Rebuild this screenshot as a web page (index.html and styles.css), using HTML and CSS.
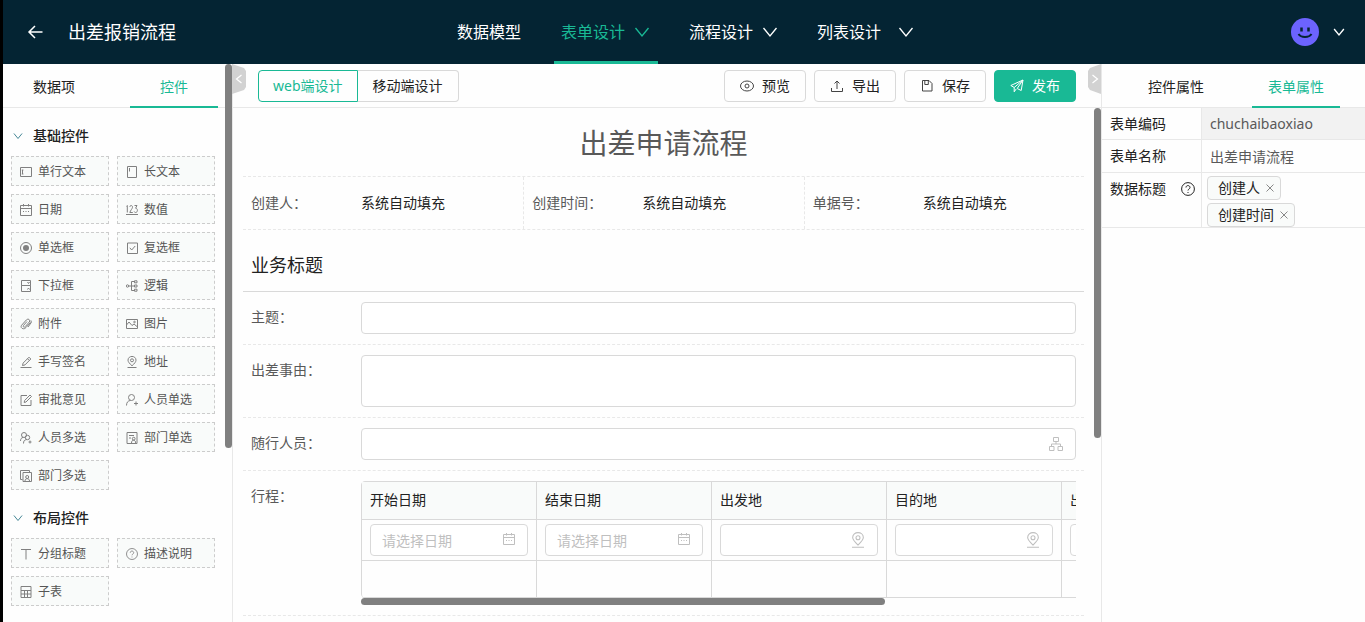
FILE: index.html
```html
<!DOCTYPE html>
<html lang="zh-CN">
<head>
<meta charset="utf-8">
<meta name="viewport" content="width=device-width, initial-scale=1">
<title>出差报销流程</title>
<link rel="stylesheet" href="styles.css">
</head>
<body>
<svg class="sprite" aria-hidden="true">
  <symbol id="chevron" viewBox="0 0 16 16"><path d="M1.5 4 8 12l6.500-8"/></symbol>
  <symbol id="back" viewBox="0 0 16 16"><path d="M8 2 2 8l6 6M2 8h13.500"/></symbol>
  <symbol id="eye" viewBox="0 0 14 14"><ellipse cx="7" cy="7" rx="6.500" ry="5"/><circle cx="7" cy="7" r="2"/></symbol>
  <symbol id="export" viewBox="0 0 14 14"><path d="M1.500 9v3.500h11V9M7 10V2M4.500 4.500 7 2l2.500 2.500"/></symbol>
  <symbol id="save" viewBox="0 0 14 14"><path d="M2.500 1.500h6.500L12 4.500v7.500H2.500zM4.800 1.500v4h3.500v-4"/></symbol>
  <symbol id="send" viewBox="0 0 14 14"><path d="M13 1 .800 6.500l3.400 2L13 1l-1.800 10.500-4-2L13 1M4.200 8.500v4.300l2-2.800"/></symbol>
  <symbol id="text" viewBox="0 0 12 12"><path d="M.5 1.500h11v9H.5zM2.500 4v4M1.800 4h1.600M1.800 8h1.600"/></symbol>
  <symbol id="longtext" viewBox="0 0 12 12"><path d="M1.500.500h9v11h-9zM3.500 2v3.500"/></symbol>
  <symbol id="calendar" viewBox="0 0 12 12"><path d="M.5 1.500h11v10H.5zM.5 4.500h11M3.500 0v2.500M8.500 0v2.500M3 7.500h1M5.500 7.500h1M8 7.500h1"/></symbol>
  <symbol id="number" viewBox="0 0 12 12"><path d="M0 10.500h12M.3 2.500l1-1v7M3.800 2.800c.3-2 3-1.500 2.700.500-.2 1.500-2 3-2.700 5.200h3M8.500 1.500H11L9.600 4.200c2.400 0 2.400 4.300 0 4.300-.800 0-1.200-.4-1.400-1"/></symbol>
  <symbol id="radio" viewBox="0 0 12 12"><circle cx="6" cy="6" r="5.500"/><circle class="solid" cx="6" cy="6" r="3"/></symbol>
  <symbol id="check" viewBox="0 0 12 12"><path d="M1.500 1h10v10.500h-10zM3.800 5.800 5.700 8 9.200 4"/></symbol>
  <symbol id="select" viewBox="0 0 12 12"><path d="M1.500.500h9v5h-9zM1.500 5.500h9v6h-9zM7.500 2l1 1.500 1-1.500M7.500 9.500l1-1.500 1 1.500"/></symbol>
  <symbol id="logic" viewBox="0 0 12 12"><circle cx="1.500" cy="6" r="1.200"/><path d="M2.800 6H8M8 1.500H5.500v9H8"/><path d="M8.500.800h2.500v2H8.500zM8.500 5h2.500v2H8.500zM8.500 9.200h2.500v2H8.500z"/></symbol>
  <symbol id="clip" viewBox="0 0 12 12"><path d="M10.500 4.500 6 9.500c-2.500 3-6.500.200-4.200-2.500L6.300 2c1.800-2 4.600 0 3 2L5.200 8.600C4 10 2.500 8.500 3.500 7.400L7 3.500M11 2.500 11.300 4.500 8 9"/></symbol>
  <symbol id="image" viewBox="0 0 12 12"><path d="M.5 1.500h11v9H.5zM.5 7l2.500-3 3 3.500L8 6l3.500 3"/><circle cx="8.500" cy="4" r=".8"/></symbol>
  <symbol id="pen" viewBox="0 0 12 12"><path d="M.5 11.500h11M2.500 9.500l.6-2.400L9 1.200l1.800 1.800L5 8.900zM7.500 2.700l1.800 1.800"/></symbol>
  <symbol id="pin" viewBox="0 0 12 12"><path d="M1.500 11.500h9M6 9.800C3.500 7.500 2 5.800 2 4.200c0-5 8-5 8 0C10 5.800 8.500 7.500 6 9.800z"/><circle cx="6" cy="4.300" r="1.500"/></symbol>
  <symbol id="edit" viewBox="0 0 12 12"><path d="M7 1.500H1v10h10V6M4.200 8.500l.4-2L10 1l1.500 1.500L6 8z"/></symbol>
  <symbol id="person" viewBox="0 0 12 12"><circle cx="5.500" cy="3.500" r="3"/><path d="M.5 11.500c0-3 1.500-5 4-5M8 9.500h4M10 7.500v4"/></symbol>
  <symbol id="people" viewBox="0 0 12 12"><circle cx="4" cy="3" r="2.500"/><circle cx="7.500" cy="5.500" r="2.200"/><path d="M.5 9c0-2 1-3.500 2.500-3.500M3.500 11.500c0-2.500 1-3.800 3-3.800M8.500 10h3M10 8.500v3"/></symbol>
  <symbol id="dept" viewBox="0 0 12 12"><path d="M1 .500h10v11H1zM3 3.500h5M3 6h2M5.500 11c0-1.800.800-2.800 2-2.800s2.200 1 2.200 2.800"/><circle cx="7.700" cy="6.700" r="1.400"/></symbol>
  <symbol id="depts" viewBox="0 0 12 12"><path d="M2.500 9.500h-2v-9h9v2M3 2.500h8.500v9H3zM5 11c0-1.500.800-2.300 2.200-2.300S9.500 9.500 9.500 11"/><circle cx="7.200" cy="7" r="1.500"/></symbol>
  <symbol id="title" viewBox="0 0 12 12"><path d="M1 1.500h10M6 1.500v10"/></symbol>
  <symbol id="help" viewBox="0 0 14 14"><circle cx="7" cy="7" r="6.400"/><path d="M5 5.500c0-2.700 4-2.400 4 0C9 7 7 7 7 8.500M7 10v1"/></symbol>
  <symbol id="grid" viewBox="0 0 12 12"><path d="M1 .500h10v11H1zM1 4.500h10M1 8h10M4.500 4.500v7M7.500 4.500v7"/></symbol>
  <symbol id="org" viewBox="0 0 14 14"><path d="M4.500.500h5v4h-5zM.5 9.500H5v4H.5zM9 9.500h4.500v4H9zM7 4.500V7M2.500 9.500V7h9v2.500"/></symbol>
  <symbol id="close" viewBox="0 0 8 8"><path d="M.5.500l7 7M7.500.500l-7 7"/></symbol>
</svg>

<header class="topbar">
  <div class="brand">
    <button class="plain" aria-label="返回"><svg class="icon-md back"><use href="#back"/></svg></button>
    <h1>出差报销流程</h1>
  </div>
  <nav class="nav">
    <a href="#model">数据模型</a>
    <a href="#form" class="active">表单设计<svg class="icon-md"><use href="#chevron"/></svg></a>
    <a href="#flow">流程设计<svg class="icon-md"><use href="#chevron"/></svg></a>
    <a href="#list" class="wide">列表设计<svg class="icon-md"><use href="#chevron"/></svg></a>
  </nav>
  <div class="account">
    <svg class="avatar" viewBox="0 0 28 28"><circle cx="14" cy="14" r="14" fill="#6c63ff"/><path d="M10.500 9.500v4M17.500 9.500v4" stroke="#042433" stroke-width="2.500"/><path d="M7.500 16c2.500 4 10.500 4 13 0" fill="none" stroke="#042433" stroke-width="2"/></svg>
    <button class="plain" aria-label="账户菜单"><svg class="icon-sm"><use href="#chevron"/></svg></button>
  </div>
</header>

<main class="workspace">
  <aside class="palette">
    <div class="tabs">
      <button>数据项</button>
      <button class="active">控件</button>
    </div>
    <h2 class="group"><svg class="icon-xs"><use href="#chevron"/></svg>基础控件</h2>
    <div class="controls">
      <button><svg><use href="#text"/></svg>单行文本</button>
      <button><svg><use href="#longtext"/></svg>长文本</button>
      <button><svg><use href="#calendar"/></svg>日期</button>
      <button><svg><use href="#number"/></svg>数值</button>
      <button><svg><use href="#radio"/></svg>单选框</button>
      <button><svg><use href="#check"/></svg>复选框</button>
      <button><svg><use href="#select"/></svg>下拉框</button>
      <button><svg><use href="#logic"/></svg>逻辑</button>
      <button><svg><use href="#clip"/></svg>附件</button>
      <button><svg><use href="#image"/></svg>图片</button>
      <button><svg><use href="#pen"/></svg>手写签名</button>
      <button><svg><use href="#pin"/></svg>地址</button>
      <button><svg><use href="#edit"/></svg>审批意见</button>
      <button><svg><use href="#person"/></svg>人员单选</button>
      <button><svg><use href="#people"/></svg>人员多选</button>
      <button><svg><use href="#dept"/></svg>部门单选</button>
      <button><svg><use href="#depts"/></svg>部门多选</button>
    </div>
    <h2 class="group"><svg class="icon-xs"><use href="#chevron"/></svg>布局控件</h2>
    <div class="controls">
      <button><svg><use href="#title"/></svg>分组标题</button>
      <button><svg><use href="#help"/></svg>描述说明</button>
      <button><svg><use href="#grid"/></svg>子表</button>
    </div>
    <div class="scroll-thumb"></div>
  </aside>

  <section class="designer">
    <button class="handle handle-left" aria-label="收起左侧"><svg><use href="#chevron"/></svg></button>
    <button class="handle handle-right" aria-label="收起右侧"><svg><use href="#chevron"/></svg></button>
    <div class="toolbar">
      <div class="switch">
        <button class="active">web端设计</button>
        <button>移动端设计</button>
      </div>
      <div class="actions">
        <button><svg><use href="#eye"/></svg>预览</button>
        <button><svg><use href="#export"/></svg>导出</button>
        <button><svg><use href="#save"/></svg>保存</button>
        <button class="primary"><svg><use href="#send"/></svg>发布</button>
      </div>
    </div>
    <div class="canvas">
      <form class="form">
        <h2 class="form-title">出差申请流程</h2>
        <div class="meta">
          <div><span>创建人：</span><b>系统自动填充</b></div>
          <div><span>创建时间：</span><b>系统自动填充</b></div>
          <div><span>单据号：</span><b>系统自动填充</b></div>
        </div>
        <h3 class="section-title">业务标题</h3>
        <div class="field">
          <label for="subject">主题：</label>
          <input id="subject" type="text">
        </div>
        <div class="field">
          <label for="reason">出差事由：</label>
          <textarea id="reason"></textarea>
        </div>
        <div class="field">
          <label for="members">随行人员：</label>
          <div class="with-icon"><input id="members" type="text"><svg><use href="#org"/></svg></div>
        </div>
        <div class="field">
          <span class="label">行程：</span>
          <div class="trip">
            <div class="trip-view">
              <table>
                <thead><tr><th>开始日期</th><th>结束日期</th><th>出发地</th><th>目的地</th><th>出</th></tr></thead>
                <tbody>
                  <tr>
                    <td><div class="with-icon date"><input type="text" placeholder="请选择日期" aria-label="开始日期"><svg><use href="#calendar"/></svg></div></td>
                    <td><div class="with-icon date"><input type="text" placeholder="请选择日期" aria-label="结束日期"><svg><use href="#calendar"/></svg></div></td>
                    <td><div class="with-icon pin"><input type="text" aria-label="出发地"><svg><use href="#pin"/></svg></div></td>
                    <td><div class="with-icon pin"><input type="text" aria-label="目的地"><svg><use href="#pin"/></svg></div></td>
                    <td><div class="with-icon"><input type="text" aria-label="出"></div></td>
                  </tr>
                  <tr class="empty"><td></td><td></td><td></td><td></td><td></td></tr>
                </tbody>
              </table>
            </div>
            <div class="trip-thumb"></div>
          </div>
        </div>
      </form>
      <div class="scroll-thumb"></div>
    </div>
  </section>

  <aside class="properties">
    <div class="tabs">
      <button>控件属性</button>
      <button class="active">表单属性</button>
    </div>
    <div class="prop">
      <label for="code">表单编码</label>
      <input id="code" class="locked" type="text" value="chuchaibaoxiao" readonly>
    </div>
    <div class="prop tall">
      <label for="name">表单名称</label>
      <input id="name" type="text" value="出差申请流程">
    </div>
    <div class="prop">
      <div class="prop-label">数据标题<svg><use href="#help"/></svg></div>
      <div class="tags">
        <span class="tag">创建人<button aria-label="移除创建人"><svg><use href="#close"/></svg></button></span>
        <span class="tag">创建时间<button aria-label="移除创建时间"><svg><use href="#close"/></svg></button></span>
      </div>
    </div>
  </aside>
</main>
</body>
</html>
```

FILE: styles.css
```css
:root {
  --accent: #19b995;
  --navy: #042433;
  --line: #d9d9d9;
  --soft: #e8e8e8;
  --ink: #222;
  --muted: #595959;
}

* { box-sizing: border-box; }

body {
  margin: 0;
  height: 100vh;
  display: flex;
  flex-direction: column;
  overflow: hidden;
  border-left: 3px solid #000;
  background: #fefefe;
  color: var(--ink);
  font: 14px/22px "Noto Sans", "Noto Sans CJK SC", sans-serif;
}

button, input, textarea { font: inherit; color: inherit; margin: 0; }
button { padding: 0; border: 0; background: none; cursor: pointer; }
h1, h2, h3 { margin: 0; font-weight: 400; }
svg { flex: none; fill: none; stroke: currentColor; stroke-width: 1; overflow: visible; }
.solid { fill: currentColor; stroke: none; }
.sprite { position: absolute; width: 0; height: 0; }
.icon-md { width: 16px; height: 16px; stroke-width: 1.3; }
.back { stroke-width: 1.5; }
.icon-sm { width: 12px; height: 12px; stroke-width: 1.8; }
.icon-xs { width: 10px; height: 10px; stroke-width: 1.5; color: #3a7f8f; }
.plain { display: flex; }

/* Top bar */
.topbar {
  flex: none;
  height: 64px;
  display: grid;
  grid-template-columns: 1fr auto 1fr;
  padding: 0 20px 0 24px;
  background: var(--navy);
  color: #fff;
}
.brand { display: flex; align-items: center; gap: 25px; }
.brand h1 { font-size: 18px; line-height: 24px; }
.nav { display: flex; gap: 24px; }
.nav a {
  display: flex;
  align-items: center;
  gap: 9px;
  padding: 0 8px 0 7px;
  border-bottom: 3px solid transparent;
  border-top: 3px solid transparent;
  color: #fff;
  font-size: 16px;
  text-decoration: none;
}
.nav a:first-child { padding-right: 9px; }
.nav .wide { gap: 17px; }
.nav .active { color: var(--accent); border-bottom-color: var(--accent); }
.account { display: flex; align-items: center; justify-content: flex-end; gap: 14px; }
.avatar { width: 28px; height: 28px; stroke: none; }

/* Workspace */
.workspace {
  flex: 1;
  min-height: 0;
  display: grid;
  grid-template-columns: 230px minmax(0, 1fr) 264px;
}
.tabs {
  display: flex;
  gap: 32px;
  height: 44px;
  border-bottom: 1px solid var(--soft);
}
.tabs button {
  width: 88px;
  height: 44px;
  padding-top: 4px;
  border-bottom: 2px solid transparent;
}
.tabs .active { color: var(--accent); border-bottom-color: var(--accent); }
.scroll-thumb {
  position: absolute;
  top: 0;
  right: 0;
  width: 7px;
  border-radius: 4px;
  background: #808080;
}

/* Control palette */
.palette { position: relative; border-right: 1px solid var(--soft); overflow: hidden; }
.palette .tabs { padding-left: 7px; }
.palette .scroll-thumb { height: 384px; }
.group {
  display: flex;
  align-items: center;
  gap: 10px;
  height: 40px;
  margin-top: 8px;
  padding-left: 10px;
  font-size: 14px;
  font-weight: 500;
}
.controls {
  display: grid;
  grid-template-columns: 1fr 1fr;
  gap: 8px;
  padding: 0 17px 0 8px;
}
.controls button {
  display: flex;
  align-items: center;
  gap: 6px;
  height: 30px;
  padding: 2px 8px 0;
  border: 1px dashed #ccc;
  background: #f9fbfa;
  color: #555;
  font-size: 12px;
}
.controls svg { width: 12px; height: 12px; color: #808080; }

/* Designer */
.designer { position: relative; display: flex; flex-direction: column; min-height: 0; }
.handle {
  position: absolute;
  top: 0;
  display: grid;
  place-items: center;
  width: 14px;
  height: 30px;
  background: #d2d2d2;
  color: #fff;
}
.handle svg { width: 10px; height: 10px; stroke-width: 2; }
.handle-left { left: -1px; clip-path: polygon(0 0, 12px 4px, 14px 7px, 14px 23px, 12px 26px, 0 30px); }
.handle-left svg { transform: rotate(90deg); }
.handle-right { right: 0; width: 13px; clip-path: polygon(13px 0, 2px 4px, 0 7px, 0 23px, 2px 26px, 13px 30px); }
.handle-right svg { transform: rotate(-90deg); }
.toolbar {
  flex: none;
  display: flex;
  align-items: center;
  justify-content: space-between;
  height: 44px;
  padding: 0 25px;
  border-bottom: 1px solid var(--soft);
}
.switch, .actions { display: flex; }
.actions { gap: 8px; }
.switch button, .actions button {
  height: 32px;
  border: 1px solid var(--line);
}
.switch button { padding: 0 15px; border-radius: 0 4px 4px 0; border-left: 0; }
.switch .active {
  padding: 0 14px;
  border: 1px solid var(--accent);
  border-radius: 4px 0 0 4px;
  color: var(--accent);
}
.actions button {
  display: flex;
  align-items: center;
  justify-content: center;
  gap: 8px;
  width: 82px;
  border-radius: 4px;
}
.actions svg { width: 14px; height: 14px; color: #444; }
.actions .primary { border-color: var(--accent); background: var(--accent); color: #fff; }
.actions .primary svg { color: #fff; }

.canvas { position: relative; flex: 1; min-height: 0; overflow: hidden; padding: 0 17px 0 10px; }
.canvas > .scroll-thumb { height: 330px; }
.form-title {
  padding: 17px 0 15px;
  color: var(--muted);
  font-size: 28px;
  line-height: 36px;
  text-align: center;
}
.meta {
  display: grid;
  grid-template-columns: repeat(3, 1fr);
  border: 1px dashed var(--soft);
  border-width: 1px 0;
}
.meta div { display: flex; padding: 15px 8px; }
.meta div + div { border-left: 1px dashed var(--soft); }
.meta span { flex: none; width: 110px; color: var(--muted); }
.meta b { font-weight: 400; }
.section-title {
  padding: 21px 8px 12px;
  border-bottom: 1px solid var(--line);
  font-size: 18px;
  line-height: 28px;
}
.field {
  display: flex;
  padding: 10px 8px;
  border-bottom: 1px dashed var(--soft);
}
.field > label, .label { flex: none; width: 110px; padding-top: 4px; color: var(--muted); }
.field input, .field textarea {
  display: block;
  flex: 1;
  width: 100%;
  height: 32px;
  padding: 0 11px;
  border: 1px solid var(--line);
  border-radius: 4px;
  background: #fff;
}
.field textarea { height: 52px; resize: none; }
.field input::placeholder { color: #bfbfbf; }
.with-icon { position: relative; flex: 1; }
.with-icon svg {
  position: absolute;
  top: 9px;
  right: 13px;
  width: 14px;
  height: 14px;
  color: #bfbfbf;
}
.with-icon.date svg { width: 12px; height: 12px; }
.with-icon.pin svg { top: 8px; right: 12px; width: 16px; height: 16px; stroke-width: .8; }

.trip { flex: 1; min-width: 0; }
.trip-view { overflow: hidden; border-radius: 4px 0 0 4px; }
.trip table {
  width: 876px;
  table-layout: fixed;
  border-spacing: 0;
  border: 1px solid var(--line);
  border-width: 1px 0 0 1px;
  border-radius: 4px 0 0 4px;
}
.trip th, .trip td {
  padding: 4px 8px;
  border: 1px solid var(--line);
  border-width: 0 1px 1px 0;
}
.trip th {
  height: 38px;
  padding: 3px 8px 5px;
  background: #f9fbfa;
  font-weight: 400;
  text-align: left;
}
.trip .empty td { height: 37px; }
.trip-thumb { width: 524px; max-width: 100%; height: 7px; border-radius: 4px; background: #808080; }

/* Properties */
.properties { border-left: 1px solid var(--soft); }
.properties .tabs { padding-left: 30px; }
.prop {
  display: grid;
  grid-template-columns: 99px minmax(0, 1fr);
  border-bottom: 1px solid var(--soft);
}
.prop label, .prop-label { padding: 5px 5px 4px 8px; }
.prop.tall label { padding-bottom: 5px; }
.prop-label { display: flex; align-items: flex-start; gap: 15px; white-space: nowrap; }
.prop-label svg { width: 14px; height: 14px; margin-top: 4px; }
.prop input {
  height: 100%;
  padding: 0 8px;
  border: 0;
  border-left: 1px solid var(--soft);
  background: none;
  color: var(--muted);
}
.prop .locked { background: #f2f2f2; }
.tags {
  display: flex;
  flex-direction: column;
  align-items: flex-start;
  gap: 3px;
  padding: 3px 5px 0;
  border-left: 1px solid var(--soft);
}
.tag {
  display: flex;
  align-items: center;
  gap: 6px;
  height: 24px;
  padding: 0 6px 0 10px;
  border: 1px solid var(--line);
  border-radius: 4px;
  background: #f9fbfa;
}
.tag button { display: flex; color: #888; }
.tag svg { width: 8px; height: 8px; }
```
